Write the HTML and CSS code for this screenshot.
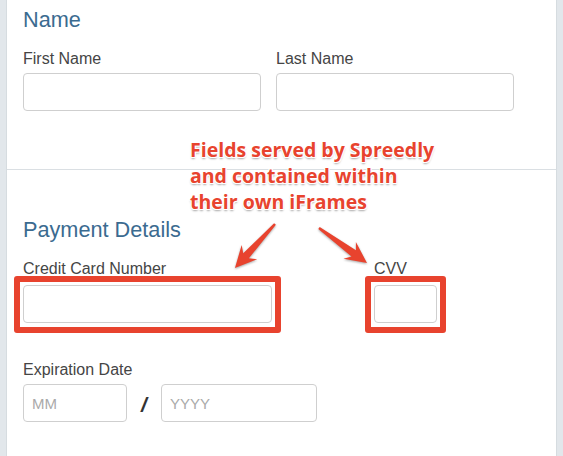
FILE: index.html
```html
<!DOCTYPE html>
<html>
	<head>
		<title>Payment form</title>
		<link rel="stylesheet" href="styles.css">
	</head>

	<body>
		<div class="card">
			<section class="group">
				<h2>Name</h2>
				<div class="row">
					<div class="field">
						<label>First Name</label>
						<input type="text" class="wide">
					</div>
					<div class="field">
						<label>Last Name</label>
						<input type="text" class="wide">
					</div>
				</div>
			</section>

			<section class="group payment">
				<h2>Payment Details</h2>
				<div class="row cards">
					<div class="field">
						<label>Credit Card Number</label>
						<div class="spreedly"><input type="text" class="number"></div>
					</div>
					<div class="field">
						<label>CVV</label>
						<div class="spreedly"><input type="text" class="cvv"></div>
					</div>
				</div>
				<div class="field expiry">
					<label>Expiration Date</label>
					<div class="expiryInputs">
						<input type="text" class="month" placeholder="MM">
						<span class="slash">/</span>
						<input type="text" class="year" placeholder="YYYY">
					</div>
				</div>
			</section>

			<div class="callout">
				Fields served by Spreedly<br>
				and contained within<br>
				their own iFrames
			</div>
			<svg class="arrows" viewBox="220 215 170 60" width="170" height="60">
				<polygon transform="translate(275 224) rotate(132.3)" points="0,-1.2 43,-3.8 38,-10.5 59.5,0 38,10.5 43,3.8 0,1.2" />
				<polygon transform="translate(319 228) rotate(36.1)" points="0,-1.2 43,-3.8 38,-10.5 59.4,0 38,10.5 43,3.8 0,1.2" />
			</svg>
		</div>
	</body>
</html>
```

FILE: styles.css
```css
html, body {
	margin: 0px;
	padding: 0px;
	background: #e2e7eb;
	font-family: "Liberation Sans", Arial, sans-serif;
	color: #444;
}

.card {
	position: relative;
	margin: 0px 6px;
	height: 456px;
	box-sizing: border-box;
	background: white;
	border-left: 1px solid #d6dce0;
	border-right: 1px solid #d6dce0;
	overflow: hidden;
}

.group {
	padding: 8px 16px 58px 16px;
}

.payment {
	padding-top: 48px;
	border-top: 1px solid #dadfe3;
}

h2 {
	margin: 0px 0px 18px 0px;
	font-size: 21.7px;
	line-height: 24px;
	font-weight: normal;
	color: #3b6b90;
}

.row {
	display: flex;
	gap: 15px;
}

.cards {
	gap: 102px;
}

.field label {
	display: block;
	margin-bottom: 5px;
	font-size: 16px;
	line-height: 18px;
	color: #454545;
}

input {
	display: block;
	box-sizing: border-box;
	height: 38px;
	margin: 0px;
	padding: 0px 8px;
	border: 1px solid #cfcfcf;
	border-radius: 4px;
	background: white;
	font-family: "Liberation Sans", Arial, sans-serif;
	font-size: 15px;
	color: #444;
	outline: none;
}

input::placeholder {
	color: #aaa;
}

.wide {
	width: 238px;
}

.number {
	width: 249px;
}

.cvv {
	width: 63px;
}

.spreedly {
	margin: -7px -9px -10px -9px;
	padding: 3px 3px 4px 3px;
	border: 6px solid #e8432e;
	border-radius: 3px;
	background: white;
}

.expiry {
	margin-top: 38px;
}

.expiryInputs {
	display: flex;
	align-items: center;
}

.month {
	width: 104px;
}

.year {
	width: 156px;
}

.slash {
	width: 34px;
	text-align: center;
	font-size: 21px;
	font-weight: bold;
	font-style: italic;
	color: #333;
	padding-top: 4px;
}

.callout {
	position: absolute;
	left: 183px;
	top: 137px;
	font-family: "Open Sans", sans-serif;
	font-weight: bold;
	font-size: 19.5px;
	line-height: 26px;
	color: #e8432e;
	text-shadow: -1px -1px 0px #fff, 1px -1px 0px #fff, -1px 1px 0px #fff, 1px 1px 0px #fff, 0px 2px 2px rgba(0,0,0,0.35);
}

.arrows {
	position: absolute;
	left: 213px;
	top: 215px;
	fill: #e8432e;
	filter: drop-shadow(0px 1px 1px rgba(0,0,0,0.35));
}
```
